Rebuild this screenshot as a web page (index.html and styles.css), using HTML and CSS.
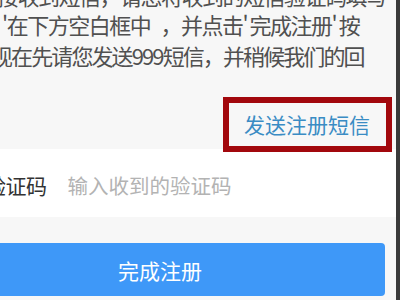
FILE: index.html
```html
<!DOCTYPE html>
<html lang="zh-CN">
<head>
<meta charset="utf-8">
<link rel="stylesheet" href="styles.css">
</head>
<body>
<div class="page">
  <div class="content">
    <section class="top">
      <div class="msg">
        <div class="line l1">接收到短信，请您将收到的短信验证码填写</div>
        <div class="line l2">'在下方空白框中&nbsp;&nbsp; ，并点击<span class="q">'</span>完成注册<span class="q">'</span>按</div>
        <div class="line l3">现在先请您发送999短信，并稍候我们的回</div>
      </div>
      <div class="link-row">
        <a class="send-link">发送注册短信</a>
      </div>
    </section>
    <section class="field">
      <span class="label">验证码</span>
      <span class="placeholder">输入收到的验证码</span>
    </section>
    <section class="actions">
      <button class="submit">完成注册</button>
    </section>
  </div>
  <div class="edge"></div>
</div>
</body>
</html>
```

FILE: styles.css
```css
html, body {
  margin: 0;
  padding: 0;
  width: 400px;
  height: 300px;
  overflow: hidden;
  background: #f7f7f7;
  font-family: "Noto Sans CJK SC", "Noto Sans", sans-serif;
}
.page {
  display: flex;
  width: 400px;
  height: 300px;
}
.content {
  flex: 1;
  margin-left: -65px;
  display: flex;
  flex-direction: column;
  min-width: 0;
}
.edge {
  width: 4px;
  background: #3a3a3a;
}
.top {
  height: 149px;
  background: #f7f7f7;
  display: flex;
  flex-direction: column;
}
.msg {
  color: #505050;
  font-size: 22px;
  letter-spacing: -1.5px;
  padding-top: 1px;
}
.line {
  height: 31px;
  line-height: 31px;
  white-space: nowrap;
}
.q { letter-spacing: 1px; }
.l1 { margin-top: -17px; margin-bottom: 3px; height: 22px; line-height: 22px; padding-left: 62px; }
.l2 { padding-left: 67px; }
.l3 { padding-left: 56px; letter-spacing: -1.9px; }
.link-row {
  display: flex;
  justify-content: flex-end;
  margin-top: 26px;
  padding-right: 4px;
  position: relative;
  z-index: 1;
}
.send-link {
  border: 6px solid #a2080d;
  background: #f7f7f7;
  height: 43px;
  line-height: 43px;
  padding: 0 16px 0 15px;
  color: #3a8cc4;
  font-size: 21px;
}
.field {
  height: 68px;
  background: #fff;
  display: flex;
  align-items: center;
  gap: 21px;
  padding-left: 50px;
  padding-top: 4px;
  box-sizing: border-box;
  font-size: 20px;
}
.label { color: #333; font-size: 21px; letter-spacing: -0.5px; }
.placeholder { color: #b3b3b3; font-size: 20.5px; }
.actions {
  flex: 1;
  background: #f7f7f7;
  padding: 26px 11px 0 0;
}
.submit {
  display: block;
  width: 100%;
  height: 53px;
  border: none;
  border-radius: 4px;
  background: #3e98f8;
  color: #fff;
  font-family: inherit;
  font-size: 21px;
  padding: 0;
}
```
